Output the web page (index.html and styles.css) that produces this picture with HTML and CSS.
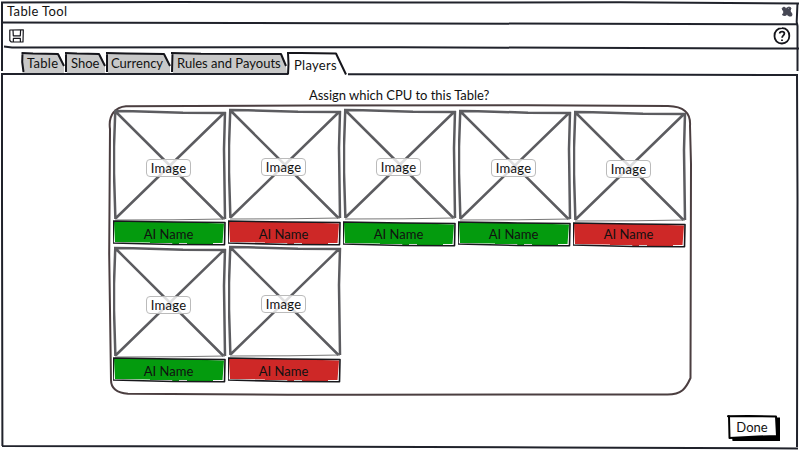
FILE: index.html
```html
<!DOCTYPE html>
<html lang="en">
<head>
<meta charset="utf-8">
<title>Table Tool</title>
<link rel="stylesheet" href="styles.css">
</head>
<body>
<svg class="defs" aria-hidden="true">
  <symbol id="picture" viewBox="0 0 115 112">
    <path class="wire" d="M1 2 L20 2.2 L70 3.7 L113 4 M2.3 1 L1 38 L1 64 L2.4 110 M112 3 L111 40 L112 110 M3 3 L110.5 110 M111 4 L3 109"/>
    <path class="faint" d="M2 111 L60 110.8 L112 110"/>
  </symbol>
  <symbol id="plate" viewBox="0 0 115 27">
    <path class="fill" d="M1 2 L94 2 L94 3 L111 3.5 L109.5 23 L100 23 L100 24 L74 24 L74 23 L66 23 L66 25 L60 25 L59 23 L37 23 L37 22.5 L2 22Z"/>
    <path class="ink" d="M0 1 L60 2 L112 2.5 L111.5 24.8 L60 24.5 L0 23 L.5 1"/>
  </symbol>
</svg>
<main class="window">
  <svg class="frame" viewBox="0 0 800 450" aria-hidden="true">
    <path d="M1 2.5 L180 2 L400 2.5 L620 2.3 L799 3.5 M2 2 L2 71 M2 74 L2 200 L2.4 446 M797.5 3 L796.7 22 L797.5 26 L797.5 71 M797 75 L797.5 200 L797 447 M2 446 L250 446.5 L550 447.5 L798 448.5"/>
    <path d="M2 22.4 L240 23 L798 24.3 M4 46.6 L12 47.4 L400 47.3 L799 48.5 M1 74 L288 74 M348 74.2 L600 74.5 L798 75"/>
  </svg>
  <header class="titlebar">
    <h1>Table Tool</h1>
    <svg class="close" viewBox="0 0 12 12"><path d="M1 2.5 L3 1 L5 2.5 L8 1 L10 2 L9 5 L11 8 L10.5 10 L8 10 L6 8.5 L4 9.5 L1.5 9 L3 6Z"/><path class="nick" d="M7 3 L7.5 2.5"/></svg>
  </header>
  <div class="toolbar">
    <svg class="save" viewBox="0 0 16 14"><path d="M.8 1 L14.3 .8 L14 13 L2.3 13 L.8 11.5Z M4 1 L4.3 6.8 L11.3 6.8 L11.6 1 M4.3 13 L4.4 9.4 L11.3 9.3 L11.4 13"/></svg>
    <svg class="help" viewBox="0 0 18 18"><path d="M9 1.2 C13.4 1 16.5 4.5 16.3 9 C16.4 13.5 13 16.5 9 16.5 C4.5 16.6 1.3 13 1.5 9 C1.3 4.5 4.5 1.2 9 1.2"/><path class="mark" d="M6.7 6.5 C6.8 4.2 11.3 4 11.4 6.6 C11.4 8.5 9.2 8.3 9.1 10.8 M9 12.4 L9 14"/></svg>
  </div>
  <nav class="tabs">
    <a class="tab t1"><svg viewBox="0 0 44 21"><path class="bg" d="M1 1 L38 2 L43 13 L43 21 L2 21Z"/><path d="M.5 1 L12 1.6 L37 2 L43 14 M1.5 1 L1.2 10 L2.5 20"/></svg><span>Table</span></a>
    <a class="tab t2"><svg viewBox="0 0 41 21"><path class="bg" d="M1 1 L34 2 L40 14 L40 21 L2 21Z"/><path d="M0 1 L12 1.6 L34 2 L40 14 M1 1 L1 20"/></svg><span>Shoe</span></a>
    <a class="tab t3"><svg viewBox="0 0 65 21"><path class="bg" d="M1 1 L58 2 L64 14 L64 21 L2 21Z"/><path d="M0 1 L20 1.5 L58 2 L64 14 M1 1 L1 20"/></svg><span>Currency</span></a>
    <a class="tab t4"><svg viewBox="0 0 116 21"><path class="bg" d="M1 1 L110 2 L115 14 L116 21 L2 21Z"/><path d="M0 1 L30 1.8 L110 2 L115 14 M1.5 1 L1 20"/></svg><span>Rules and Payouts</span></a>
    <a class="tab t5"><svg viewBox="0 0 60 23"><path class="bg on" d="M1 1 L49 1.5 L59 22.5 L1 22.5Z"/><path d="M0 1 L14 1 L49 1.5 L59 22.5 M1 1 L1.5 12 L1 22.5"/></svg><span>Players</span></a>
  </nav>
  <section class="content">
    <h2>Assign which CPU to this Table?</h2>
    <div class="panel">
      <svg class="outline" viewBox="0 0 584 292"><path d="M2 25 C0 10 8 3 18 2.2 L200 1.4 L420 1.2 L560 2 C575 2.5 583 8 582 22 L583 60 L582.5 274 C578 284 574 291 558 290.5 L250 290.7 L180 290.8 L20 289.7 C10 289 3 285 3 276 L1.2 150 Z"/></svg>
      <div class="cards">
        <article class="card"><div class="photo"><svg><use href="#picture"/></svg><span>Image</span></div><div class="name yes"><svg><use href="#plate"/></svg><span>AI Name</span></div></article>
        <article class="card up"><div class="photo"><svg><use href="#picture"/></svg><span>Image</span></div><div class="name no"><svg><use href="#plate"/></svg><span>AI Name</span></div></article>
        <article class="card up"><div class="photo"><svg><use href="#picture"/></svg><span>Image</span></div><div class="name yes low"><svg><use href="#plate"/></svg><span>AI Name</span></div></article>
        <article class="card"><div class="photo"><svg><use href="#picture"/></svg><span>Image</span></div><div class="name yes low"><svg><use href="#plate"/></svg><span>AI Name</span></div></article>
        <article class="card down"><div class="photo"><svg><use href="#picture"/></svg><span>Image</span></div><div class="name no lower"><svg><use href="#plate"/></svg><span>AI Name</span></div></article>
        <article class="card"><div class="photo"><svg><use href="#picture"/></svg><span>Image</span></div><div class="name yes"><svg><use href="#plate"/></svg><span>AI Name</span></div></article>
        <article class="card up"><div class="photo"><svg><use href="#picture"/></svg><span>Image</span></div><div class="name no"><svg><use href="#plate"/></svg><span>AI Name</span></div></article>
      </div>
    </div>
    <button class="done"><svg viewBox="0 0 53 27"><path class="shadow" d="M48 2.5 L52 2.5 L52 26 L4.5 26 L4 22 L48 22Z"/><path d="M0 1.2 L20 1 L48 1.5 L49 21 L30 21.5 L1.5 23 L1 1Z"/></svg><span>Done</span></button>
  </section>
</main>
</body>
</html>
```

FILE: styles.css
```css
* { box-sizing: border-box; }
body { margin: 0; background: #fff; color: #111; font: 13px/16px Lato, "Liberation Sans", sans-serif; overflow: hidden; }
h1, h2 { margin: 0; font: inherit; }
svg { display: block; fill: none; stroke: #15151b; stroke-width: 2; stroke-linejoin: round; }
.defs { position: absolute; width: 0; height: 0; }
.window { position: relative; width: 800px; height: 450px; display: flex; flex-direction: column; }
.frame { position: absolute; inset: 0; width: 800px; height: 450px; stroke: #20222b; pointer-events: none; }
.titlebar { height: 24px; padding: 3px 7px 0; display: flex; justify-content: space-between; }
.titlebar h1 { letter-spacing: .38px; }
.close { width: 12px; height: 12px; margin: 3px 0 0; }
.close path { fill: #454653; stroke: #454653; stroke-width: 1; }
.close .nick { stroke: #c5c5cc; }
.toolbar { height: 24px; padding: 3px 9px 0; display: flex; justify-content: space-between; }
.save { width: 16px; height: 14px; margin-top: 2px; stroke-width: 1.2; }
.help { width: 18px; height: 18px; stroke-width: 1.8; }
.tabs { height: 28px; padding: 4px 0 0 21px; display: flex; gap: 0; }
.tab { position: relative; height: 21px; }
.tab svg { position: absolute; top: 0; left: 0; width: 100%; height: 100%; overflow: visible; }
.tab svg .bg { fill: #c8c8c8; stroke: none; }
.tab svg .on { fill: #fff; }
.tab span { position: relative; display: block; padding: 3px 0 0 6px; white-space: nowrap; }
.t1 { width: 44px; }
.t1 span { letter-spacing: .3px; }
.t2 { width: 41px; }
.t3 { width: 65px; }
.t4 { width: 116px; }
.t5 { width: 60px; height: 23px; }
.t3 span { padding-left: 5px; }
.t5 span { padding-top: 5px; padding-left: 7px; letter-spacing: .3px; }
.content { flex: 1; padding-top: 11px; display: flex; flex-direction: column; }
.content h2 { width: 180px; margin-left: 309px; white-space: nowrap; height: 17px; letter-spacing: -.03px; }
.panel { position: relative; width: 584px; height: 292px; margin-left: 108px; padding: 5px 0 0 5px; }
.outline { position: absolute; inset: 0; width: 584px; height: 292px; stroke: #4b3e40; }
.cards { display: grid; grid-template-columns: repeat(5, 115px); grid-auto-rows: 137px; }
.card { height: 137px; }
.photo { position: relative; height: 111px; display: flex; align-items: center; justify-content: center; padding: 6px 4px 0 0; }
.photo svg { position: absolute; top: 0; left: 0; width: 115px; height: 112px; }
.wire { stroke: #5c5c60; stroke-width: 2.5; }
.faint { stroke: #777; stroke-width: 1; }
.photo span { position: relative; width: 45px; height: 18px; border: 1px solid #bbb; border-radius: 4px; background: rgba(255,255,255,.8); text-align: center; line-height: 16px; letter-spacing: .3px; }
.up .photo { top: -1px; }
.down .photo { top: 1px; }
.name { position: relative; height: 26px; text-align: center; padding: 6px 4px 0 0; }
.name svg { position: absolute; top: 0; left: 0; width: 115px; height: 27px; overflow: visible; }
.name span { position: relative; }
.low svg { top: 1px; }
.lower svg { top: 2px; }
.yes { --plate: #049b0e; }
.no { --plate: #ce2827; }
.fill { fill: var(--plate); stroke: none; }
.ink { stroke: #18181c; stroke-width: 1.6; }
.done { position: relative; width: 53px; height: 27px; margin: 19px 0 0 728px; padding: 0 5px 4px 0; border: 0; background: none; font: inherit; color: inherit; }
.done svg { position: absolute; inset: 0; width: 53px; height: 27px; overflow: visible; stroke: #000; }
.done .shadow { fill: #000; stroke: none; }
.done span { position: relative; }
```
